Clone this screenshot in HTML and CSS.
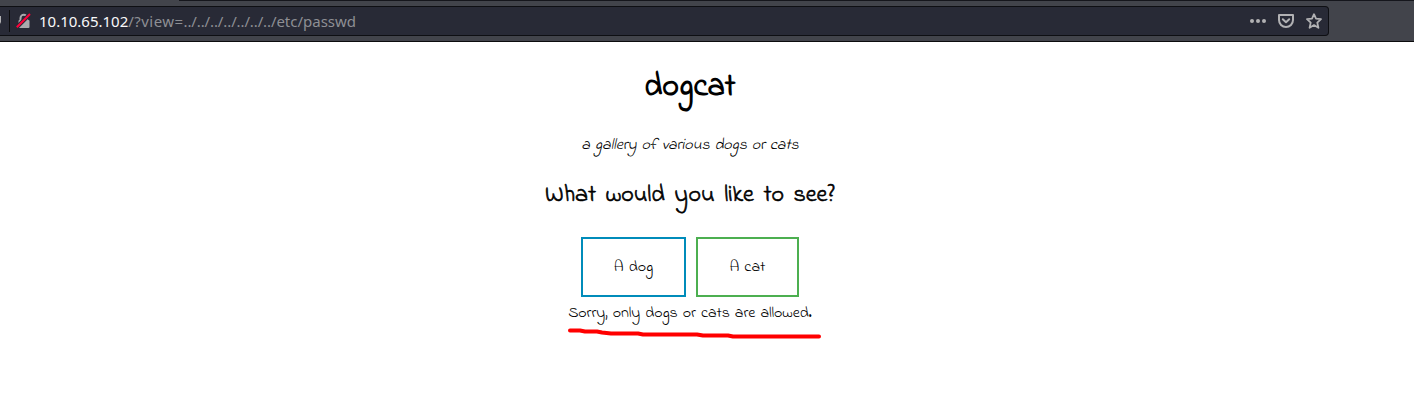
FILE: index.html
```html
<!DOCTYPE html>
<html lang="en">
<head>
<meta charset="utf-8">
<title>dogcat</title>
<link rel="stylesheet" href="styles.css">
</head>
<body>
<header class="toolbar">
  <div class="tab-edge"></div>
  <div class="urlbar">
    <svg class="shield" width="2" height="14" viewBox="0 0 2 14"><path d="M0 2H1V8L0 10Z" fill="#b1b1b3"/></svg>
    <span class="divider"></span>
    <svg class="lock" width="16" height="16" viewBox="0 0 16 16"><path d="M4.5 7V5a3.3 3.3 0 0 1 6.6 0V7" fill="none" stroke="#a9a9ad" stroke-width="2"/><rect x="2.5" y="7" width="11" height="8" rx="1" fill="#a9a9ad"/><path d="M1 14L14 1" stroke="#282a36" stroke-width="4"/><path d="M.8 14.2L14 1" stroke="#ff0039" stroke-width="2"/></svg>
    <div class="url"><span class="host">10.10.65.102</span><span class="query">/?view=</span><span class="dots">../../../../../../../</span><span>etc/passwd</span></div>
    <div class="actions">
      <svg width="16" height="16" viewBox="0 0 16 16" fill="#b1b1b3"><circle cx="2" cy="8" r="2"/><circle cx="8" cy="8" r="2"/><circle cx="14" cy="8" r="2"/></svg>
      <svg width="16" height="16" viewBox="0 0 16 16" fill="none" stroke="#b1b1b3" stroke-width="2" stroke-linecap="round" stroke-linejoin="round"><path d="M1 2H15V7a7 7 0 0 1-14 0Z"/><path d="M4.8 6.3L8 9.3L11.2 6.3"/></svg>
      <svg width="16" height="16" viewBox="0 0 16 16" fill="none" stroke="#b1b1b3" stroke-width="1.8" stroke-linejoin="round"><path d="M8 1.2L10 5.7L15 6.2L11.3 9.6L12.4 14.8L8 12.1L3.6 14.8L4.7 9.6L1 6.2L6 5.7Z"/></svg>
    </div>
  </div>
</header>
<main class="page">
  <h1 class="title">dogcat</h1>
  <p class="tagline">a gallery of various dogs or cats</p>
  <h2 class="question">What would you like to see?</h2>
  <div class="choices">
    <button class="choice dog"><span>A dog</span></button>
    <button class="choice cat"><span>A cat</span></button>
  </div>
  <p class="message">Sorry, only dogs or cats are allowed.</p>
  <svg class="underline" width="256" height="12" viewBox="0 0 256 12"><path d="M4 3.5H14L19 4.5H31L36 5.5L45 6.5H72L77 7.5H131L137 8.5H162L167 9.5H253" fill="none" stroke="#f00" stroke-width="4" stroke-linecap="round" stroke-linejoin="round"/></svg>
</main>
</body>
</html>
```
FILE: styles.css
```css
* { box-sizing: border-box; }
body { margin: 0; background: #fff; color: #000; height: 410px; overflow: hidden; }
.toolbar { height: 42px; background: #42444b; border-top: 1px solid #15161c; border-bottom: 1px solid #0c0c0d; padding-top: 5px; position: relative; }
.tab-edge { position: absolute; left: 0; top: -1px; width: 179px; height: 1px; background: #42444b; }
.urlbar { width: 1329px; height: 30px; background: #282a36; border: 1px solid #0e0f13; border-left: 0; border-radius: 0 4px 4px 0; display: flex; align-items: center; }
.shield { margin-right: 7px; }
.divider { width: 1px; height: 22px; background: #0c0c0d; margin-right: 6px; }
.lock { margin-right: 7px; }
.url { font: 15px/20px "Noto Sans", sans-serif; color: #8e8f94; white-space: nowrap; flex: 1; }
.host { color: #f9f9fa; }
.query { letter-spacing: .45px; }
.dots { letter-spacing: -.12px; }
.actions { display: flex; gap: 12px; padding-right: 6px; }
.page { width: 1380px; display: flex; flex-direction: column; align-items: center; font-family: "Indie Flower", cursive; font-size: 16px; }
.title, .tagline, .question, .message { margin: 0; white-space: nowrap; }
.title { font-size: 32px; line-height: 46px; margin-top: 23px; font-weight: 700; }
.tagline { line-height: 24px; margin-top: 22px; font-style: italic; letter-spacing: -.1px; word-spacing: 1.1px; }
.question { font-size: 24px; line-height: 34px; margin-top: 22px; font-weight: 400; -webkit-text-stroke: .6px #000; word-spacing: 3.6px; }
.choices { display: flex; gap: 10px; margin-top: 24px; }
.choice { height: 60px; background: #fff; font: inherit; color: #000; padding: 0; word-spacing: 1px; }
.dog { width: 105px; border: 2px solid #008cba; }
.cat { width: 103px; border: 2px solid #4caf50; }
.message { line-height: 24px; margin-top: 4px; letter-spacing: -.12px; word-spacing: 1.3px; }
.underline { margin: 2px 0 0 8px; }
```
